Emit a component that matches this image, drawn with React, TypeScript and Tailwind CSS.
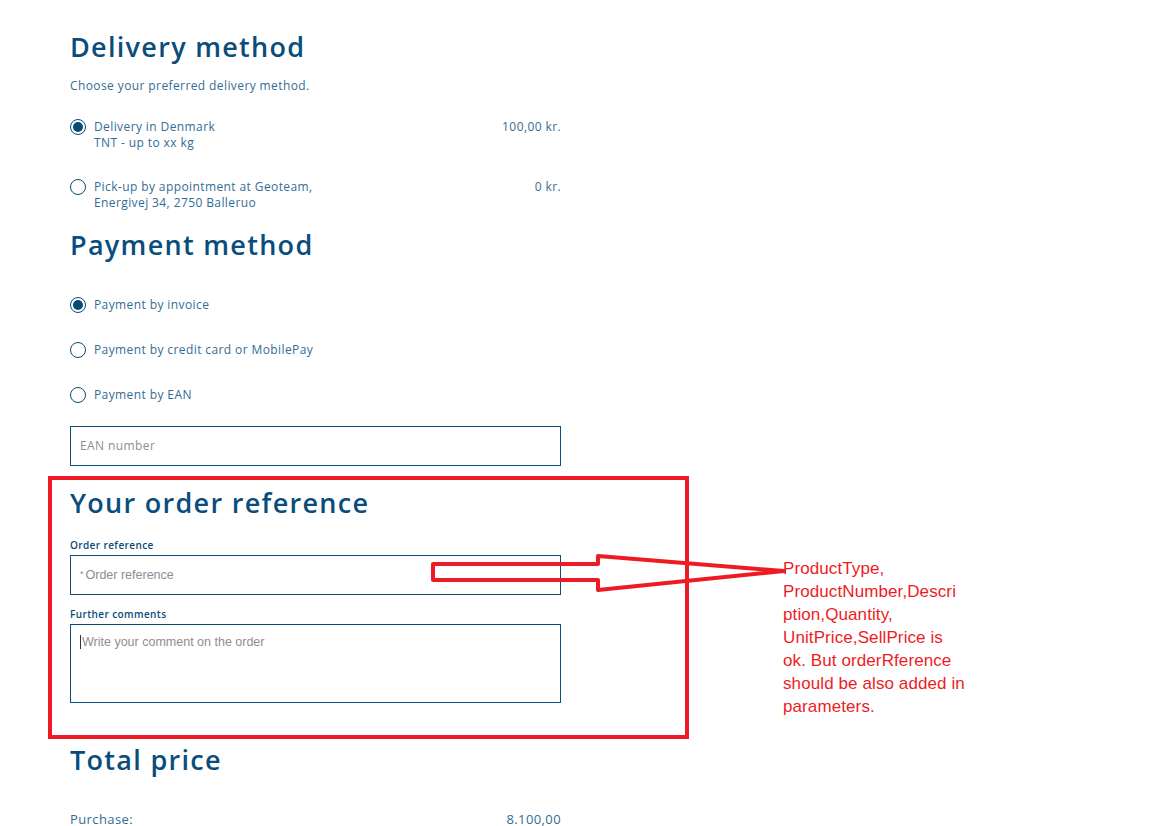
import React from 'react'

const Radio = ({ checked }: { checked?: boolean }) => (
  <span className="flex h-[16px] w-[16px] shrink-0 items-center justify-center rounded-full border border-[#0b4a75] bg-white">
    {checked && <span className="h-[10px] w-[10px] rounded-full bg-[#0b4a75]" />}
  </span>
)

const Option = ({
  checked,
  lines,
  price,
  className,
}: {
  checked?: boolean
  lines: string[]
  price?: string
  className?: string
}) => (
  <div className={`flex items-start ${className ?? ''}`}>
    <Radio checked={checked} />
    <div className="ml-[8px] flex-1 leading-[16px]">
      {lines.map((l) => (
        <div key={l}>{l}</div>
      ))}
    </div>
    {price && <div className="leading-[16px]">{price}</div>}
  </div>
)

const heading = "h-[32px] text-[27px] leading-[32px] font-semibold tracking-[1.3px] text-[#0a4d7c]"

const App = () => {
  return (
    <div className="relative min-h-[826px] overflow-hidden bg-white font-['Open_Sans',sans-serif] text-[12px] tracking-[0.4px] text-[#336d95]">
      <div className="ml-[70px] w-[491px] pt-[31px]">
        {/* delivery */}
        <h2 className={heading}>Delivery method</h2>
        <p className="mt-[15px] leading-[16px]">Choose your preferred delivery method.</p>
        <Option className="mt-[25px]" checked lines={['Delivery in Denmark', 'TNT - up to xx kg']} price="100,00 kr." />
        <Option className="mt-[28px]" lines={['Pick-up by appointment at Geoteam,', 'Energivej 34, 2750 Balleruo']} price="0 kr." />

        {/* payment */}
        <h2 className={`${heading} mt-[18px]`}>Payment method</h2>
        <Option className="mt-[36px]" checked lines={['Payment by invoice']} />
        <Option className="mt-[29px]" lines={['Payment by credit card or MobilePay']} />
        <Option className="mt-[29px]" lines={['Payment by EAN']} />
        <div className="mt-[23px] flex h-[40px] items-center border border-[#0b4f7c] pl-[9px] text-[#8a8f94]">
          EAN number
        </div>

        {/* order ref */}
        <h2 className={`${heading} mt-[21px]`}>Your order reference</h2>
        <div className="mt-[19px] text-[10px] leading-[14px] font-semibold text-[#0b4a75]">Order reference</div>
        <div className="mt-[3px] flex h-[40px] items-center border border-[#0b4f7c] pl-[9px] font-['Liberation_Sans',sans-serif] text-[12.5px] tracking-normal text-[#8a8f94]">
          <span className="mr-[2px] text-[9px]">*</span> Order reference
        </div>
        <div className="mt-[12px] text-[10px] leading-[14px] font-semibold text-[#0b4a75]">Further comments</div>
        <div className="mt-[3px] h-[79px] border border-[#0b4f7c] pl-[9px] pt-[8px] font-['Liberation_Sans',sans-serif] text-[12.5px] tracking-normal text-[#8a8f94]">
          <span className="border-l border-[#333] pl-[1px]">Write your comment on the order</span>
        </div>

        {/* total */}
        <h2 className={`${heading} mt-[41px]`}>Total price</h2>
        <div className="mt-[35px] flex justify-between text-[13px] leading-[16px]">
          <span>Purchase:</span>
          <span>8.100,00</span>
        </div>
      </div>

      {/* review annotation */}
      <div className="absolute left-[48px] top-[476px] h-[263px] w-[641px] border-[4px] border-[#ed1c24]" />
      <svg className="absolute left-0 top-0" width="1152" height="826" viewBox="0 0 1152 826">
        <path
          d="M433 564 L598 564 L598 556 L784 571 L598 590 L598 580 L433 580 Z"
          fill="none"
          stroke="#ed1c24"
          strokeWidth="4"
          strokeLinejoin="round"
        />
      </svg>
      <div className="absolute left-[783px] top-[557px] font-['Liberation_Sans',sans-serif] text-[17px] leading-[23px] tracking-[0.1px] text-[#ee1c25]">
        <div>ProductType,</div>
        <div>ProductNumber,Descri</div>
        <div>ption,Quantity,</div>
        <div>UnitPrice,SellPrice is</div>
        <div>ok. But orderRference</div>
        <div>should be also added in</div>
        <div>parameters.</div>
      </div>
    </div>
  )
}

export default App
